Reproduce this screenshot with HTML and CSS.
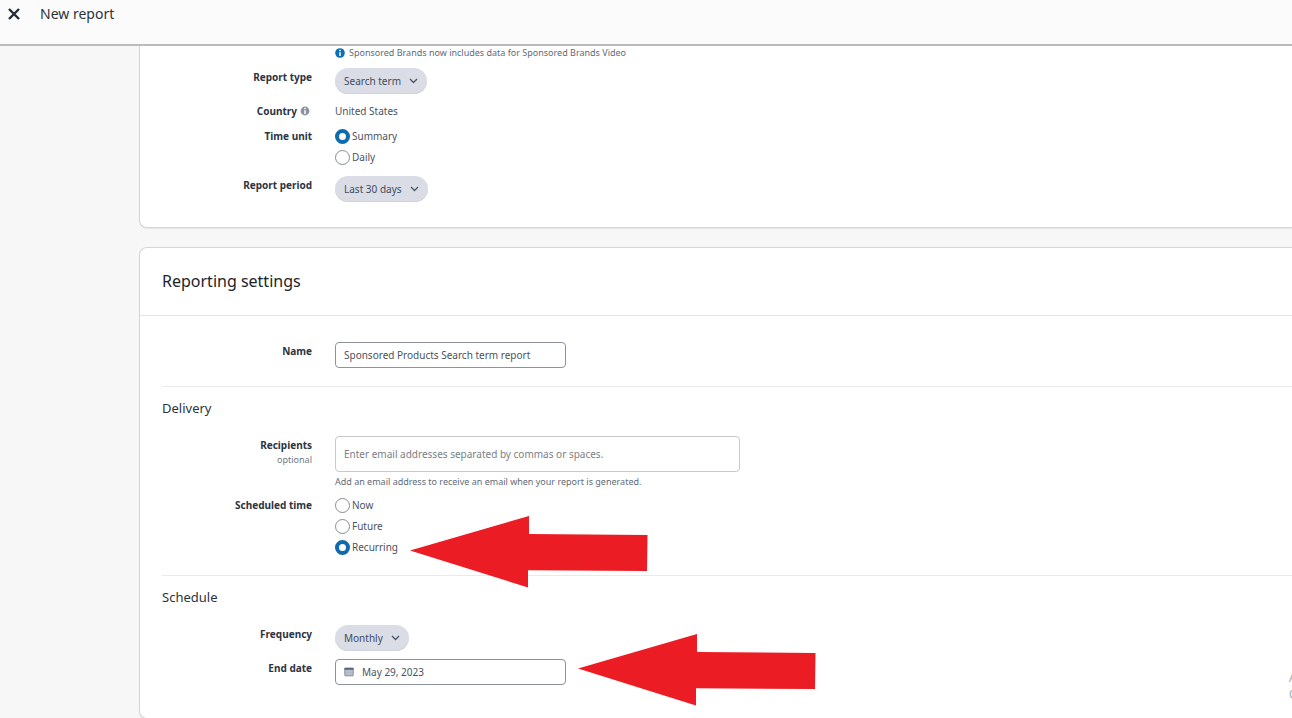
FILE: index.html
```
<!DOCTYPE html>
<html lang="en">
<head>
<meta charset="utf-8">
<title>New report</title>
<link rel="stylesheet" href="styles.css">
</head>
<body>
<header class="topbar">
  <button class="close" type="button" aria-label="Close">
    <svg width="12" height="12" viewBox="0 0 12 12"><path d="M1 1 11 11M11 1 1 11" fill="none" stroke="currentColor" stroke-width="2.4"/></svg>
  </button>
  <h1 class="page-title">New report</h1>
</header>

<main class="content">
  <section class="card card-first">
    <p class="note">
      <svg width="10" height="10" viewBox="0 0 10 10"><circle cx="5" cy="5" r="4.8" fill="#0d6fb3"/><path d="M5 1.8v1.4M5 4.2v3.9" stroke="#fff" stroke-width="1.5"/></svg>
      <span>Sponsored Brands now includes data for Sponsored Brands Video</span>
    </p>
    <div class="row">
      <label class="label" for="type">Report type</label>
      <div class="pill">
        <select id="type"><option>Search term</option></select>
        <svg class="chevron" width="9" height="6" viewBox="0 0 9 6"><path d="M1 1l3.500 3.500L8 1"/></svg>
      </div>
    </div>
    <div class="row">
      <span class="label label-info">Country
        <svg width="10" height="10" viewBox="0 0 10 10"><circle cx="5" cy="5" r="4.4" fill="#8b93a0"/><path d="M5 1.8v1.4M5 4.2v3.9" stroke="#fff" stroke-width="1.5"/></svg>
      </span>
      <span class="value">United States</span>
    </div>
    <div class="row row-radios" role="radiogroup" aria-labelledby="unit">
      <span class="label" id="unit">Time unit</span>
      <div class="radios">
        <label class="radio"><input type="radio" name="unit" checked>Summary</label>
        <label class="radio"><input type="radio" name="unit">Daily</label>
      </div>
    </div>
    <div class="row">
      <label class="label" for="period">Report period</label>
      <div class="pill">
        <select id="period"><option>Last 30 days</option></select>
        <svg class="chevron" width="9" height="6" viewBox="0 0 9 6"><path d="M1 1l3.500 3.500L8 1"/></svg>
      </div>
    </div>
  </section>

  <section class="card">
    <h2 class="card-title">Reporting settings</h2>
    <div class="group group-name">
      <div class="row">
        <label class="label" for="name">Name</label>
        <input class="field" id="name" type="text" value="Sponsored Products Search term report">
      </div>
    </div>
    <div class="group group-ruled">
      <h3 class="group-title">Delivery</h3>
      <div class="row">
        <label class="label" for="recipients">Recipients<small class="optional">optional</small></label>
        <div class="recipients">
          <input class="field field-wide" id="recipients" type="text" placeholder="Enter email addresses separated by commas or spaces.">
          <p class="help">Add an email address to receive an email when your report is generated.</p>
        </div>
      </div>
      <div class="row row-radios" role="radiogroup" aria-labelledby="time">
        <span class="label" id="time">Scheduled time</span>
        <div class="radios">
          <label class="radio"><input type="radio" name="time">Now</label>
          <label class="radio"><input type="radio" name="time">Future</label>
          <label class="radio"><input type="radio" name="time" checked>Recurring</label>
        </div>
      </div>
    </div>
    <div class="group group-ruled group-last">
      <h3 class="group-title">Schedule</h3>
      <div class="row">
        <label class="label" for="frequency">Frequency</label>
        <div class="pill">
          <select id="frequency"><option>Monthly</option></select>
          <svg class="chevron" width="9" height="6" viewBox="0 0 9 6"><path d="M1 1l3.500 3.500L8 1"/></svg>
        </div>
      </div>
      <div class="row">
        <label class="label" for="end">End date</label>
        <div class="field date">
          <svg width="10" height="10" viewBox="0 0 10 10"><rect x=".8" y="1" width="8.400" height="7.800" rx=".5" fill="#bcc4d1" stroke="#6a7588" stroke-width=".8"/><path d="M.5 1.900h9" stroke="#59647a" stroke-width="1.800"/><path d="M3.500 3v5.500M6.500 3v5.500M1 5.700h8" stroke="#a4adbc" stroke-width=".5"/></svg>
          <input id="end" type="text" value="May 29, 2023">
        </div>
      </div>
    </div>
  </section>
</main>

<svg class="arrow arrow-recurring" width="238" height="72" viewBox="0 0 238 72"><path d="M0 34.500 119 0v18l118.500 1-.5 36-119-.8v17.300z"/></svg>
<svg class="arrow arrow-date" width="238" height="72" viewBox="0 0 238 72"><path d="M0 34.500 119 0v18l118.500 1-.5 36-119-.8v17.300z"/></svg>
<div class="watermark"><span>A</span><span>G</span></div>
</body>
</html>
```
FILE: styles.css
```
* { box-sizing: border-box; }

body {
  position: relative;
  height: 100vh;
  margin: 0;
  overflow: hidden;
  background: #f7f7f7;
  color: #4a5361;
  font: 10px/14px "Noto Sans", "Open Sans", sans-serif;
}

h1, h2, h3, p { margin: 0; }
svg { flex: none; }

.topbar {
  display: flex;
  align-items: flex-start;
  gap: 20px;
  height: 46px;
  padding: 4px 8px;
  border-bottom: 2px solid #b9bbbd;
  background: #fbfbfb;
}

.close {
  display: flex;
  align-items: center;
  height: 20px;
  padding: 0;
  border: 0;
  background: none;
  color: #232b36;
}

.page-title {
  color: #2d333b;
  font-size: 14px;
  font-weight: 400;
  line-height: 20px;
}

.content {
  display: flex;
  flex-direction: column;
  gap: 19px;
  padding-left: 139px;
}

.card {
  border: 1px solid #d5d7da;
  border-right: 0;
  border-radius: 8px 0 0 8px;
  background: #fff;
  box-shadow: 0 1px 1px #e4e5e7;
}

.card-first {
  padding: 0 0 25px 22px;
  border-top: 0;
  border-radius: 0 0 0 8px;
}

.note {
  display: flex;
  align-items: center;
  gap: 4px;
  padding-left: 173px;
  color: #626b77;
  font-size: 9px;
}

.row {
  display: grid;
  grid-template-columns: 150px 1fr;
  column-gap: 23px;
  align-items: start;
  justify-items: start;
  margin-top: 8px;
}

.row-radios { margin-top: 6px; }

.label {
  justify-self: end;
  color: #2b3442;
  font-weight: 700;
  line-height: 18px;
  text-align: right;
}

.row-radios .label, .radio { line-height: 21px; }

.label-info {
  display: flex;
  align-items: center;
  gap: 3px;
  padding-right: 2px;
}

.value { line-height: 18px; }

.optional {
  display: block;
  color: #717985;
  font-size: 9px;
  font-weight: 400;
  line-height: 12px;
}

.pill { position: relative; }

.pill select {
  display: block;
  height: 26px;
  padding: 0 26px 0 9px;
  border: 0;
  border-radius: 13px;
  appearance: none;
  background: #dadde5;
  box-shadow: inset 0 -1px 0 #ced2da;
  color: #414c5e;
  font: inherit;
}

.chevron {
  position: absolute;
  top: 10px;
  right: 9px;
  fill: none;
  stroke: #4a5568;
  stroke-width: 1.3;
  pointer-events: none;
}

.radio {
  display: flex;
  align-items: center;
  gap: 2px;
}

.radio input {
  width: 15px;
  height: 15px;
  margin: 0;
  border: 1px solid #858d98;
  border-radius: 50%;
  appearance: none;
  background: #fff;
}

.radio input:checked { border: 4px solid #0f6bb0; }

.card-title {
  padding: 21px 22px;
  border-bottom: 1px solid #e5e6e8;
  color: #20242a;
  font-size: 16px;
  font-weight: 400;
  line-height: 25px;
}

.group { margin-left: 22px; }
.group-name { padding: 18px 0; }

.group-ruled {
  padding: 12px 0 17px;
  border-top: 1px solid #e9eaec;
}

.group-last { padding-bottom: 33px; }

.group-title {
  margin-bottom: 19px;
  color: #2d333b;
  font-size: 13px;
  font-weight: 400;
  line-height: 18px;
}

.group-title + .row { margin-top: 0; }

.field {
  width: 231px;
  height: 26px;
  padding: 0 8px;
  border: 1px solid #8b939e;
  border-radius: 4px;
  background: #fff;
  color: #4a5361;
  font: inherit;
}

.recipients { width: 405px; }

.field-wide {
  display: block;
  width: 100%;
  height: 36px;
  border-color: #c6c9ce;
}

.field-wide::placeholder { color: #7b8087; }

.help {
  margin-top: 3px;
  color: #626b77;
  font-size: 9px;
}

.date {
  display: flex;
  align-items: center;
  gap: 8px;
}

.date input {
  width: 100%;
  padding: 0;
  border: 0;
  background: none;
  color: inherit;
  font: inherit;
}

.arrow {
  position: absolute;
  fill: #ec1c24;
  pointer-events: none;
}

.arrow-recurring { top: 516px; left: 410px; }
.arrow-date { top: 634px; left: 578px; }

.watermark {
  position: absolute;
  right: -7px;
  bottom: 16px;
  display: grid;
  color: #b5b5b5;
  font-size: 14px;
  line-height: 17px;
}
```
